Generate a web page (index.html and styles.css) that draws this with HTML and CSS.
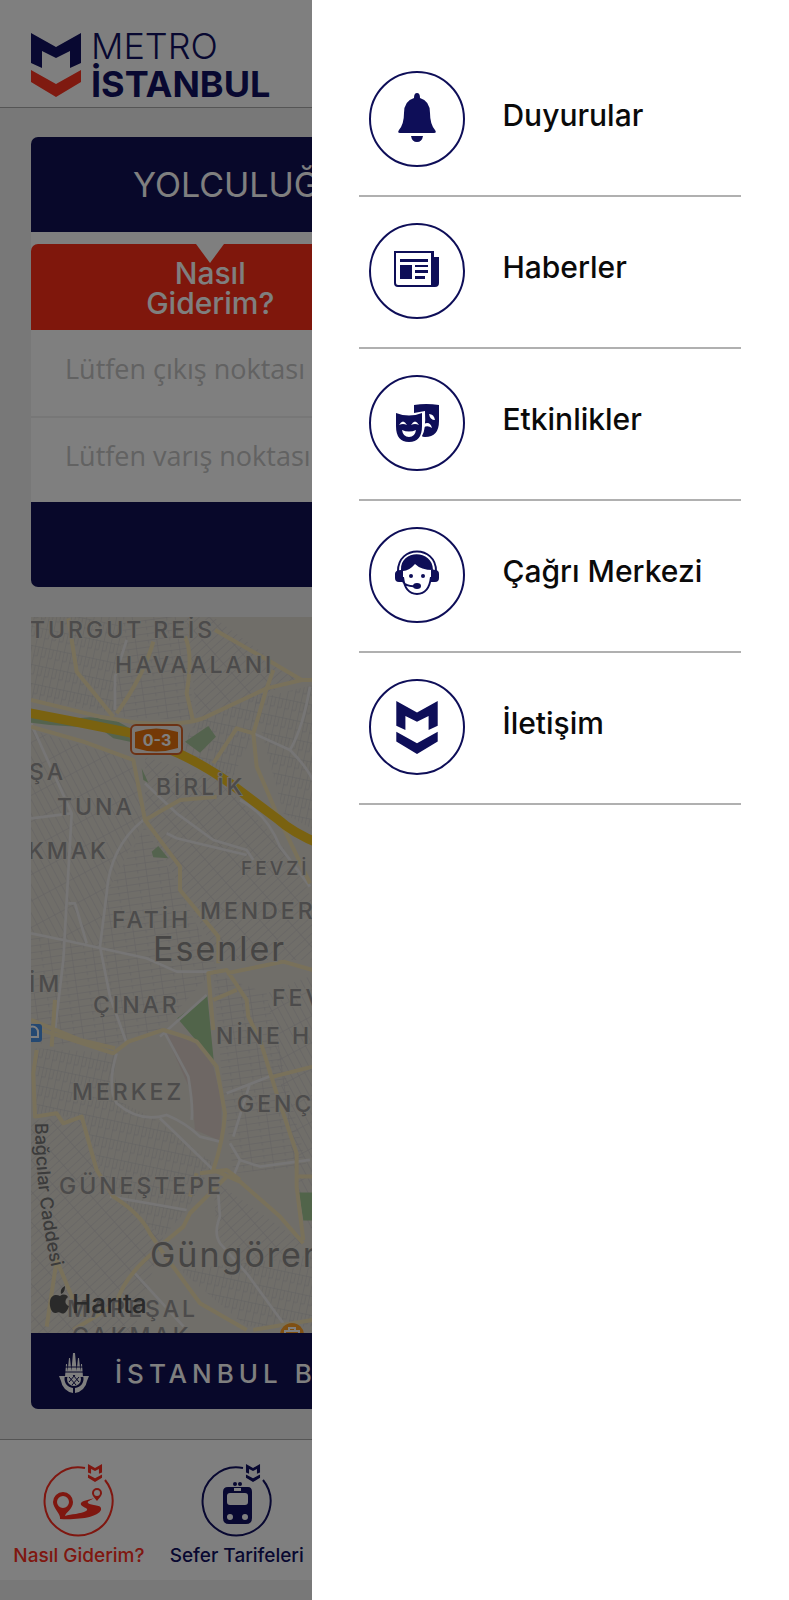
FILE: index.html
```html
<!DOCTYPE html>
<html lang="tr">
<head>
    <meta charset="UTF-8">
    <meta name="viewport" content="width=device-width, initial-scale=1">
    <title>Metro İstanbul</title>
    <link rel="stylesheet" href="styles.css">
</head>
<body>
<svg width="0" height="0" class="defs">
    <symbol id="m-mark" viewBox="0 0 50 64">
        <path d="M0 0L25 14L50 0V30L39 35V18L25 25L11 18V35L0 30Z"/>
        <path class="m-low" d="M0 37L25 51L50 37V49L25 64L0 49Z"/>
    </symbol>
</svg>
<div class="app">
    <header class="header">
        <svg class="logo-mark" viewBox="0 0 50 64"><use href="#m-mark"/></svg>
        <div class="logo-text">
            <span class="thin">METRO</span>
            <span class="bold">İSTANBUL</span>
        </div>
    </header>
    <main class="content">
        <section class="planner">
            <h1 class="planner-title">YOLCULUĞ</h1>
            <div class="tabs">
                <button class="tab" type="button">Nasıl<br>Giderim?</button>
            </div>
            <input class="field" type="text" aria-label="Çıkış noktası" placeholder="Lütfen çıkış noktası">
            <input class="field" type="text" aria-label="Varış noktası" placeholder="Lütfen varış noktası">
            <div class="planner-foot"></div>
        </section>
        <section class="map-card">
            <svg class="map">
                <defs>
                    <pattern id="s1" width="22" height="56" patternUnits="userSpaceOnUse" patternTransform="rotate(12)">
                        <path d="M0 1H22M0 29H11M1 0V56M12 0V29"/>
                    </pattern>
                    <pattern id="s2" width="20" height="70" patternUnits="userSpaceOnUse" patternTransform="rotate(-28)">
                        <path d="M0 1H20M1 0V70"/>
                    </pattern>
                    <pattern id="s3" width="64" height="20" patternUnits="userSpaceOnUse" patternTransform="rotate(-8)">
                        <path d="M0 1H64M1 0V20M40 0V10"/>
                    </pattern>
                    <pattern id="s4" width="19" height="62" patternUnits="userSpaceOnUse" patternTransform="rotate(48)">
                        <path d="M0 1H19M1 0V62"/>
                    </pattern>
                </defs>
                <!-- 3 units = 1px, origin at the top left of the screen -->
                <g transform="translate(-31 -17) scale(.3333)">
                    <g>
                        <path fill="url(#s1)" d="M93 51H370L345 340L93 300Z"/>
                        <path fill="url(#s3)" d="M370 51H560L580 360L345 350Z"/>
                        <path fill="url(#s4)" d="M560 51H640L900 240L590 360Z"/>
                        <path fill="url(#s1)" d="M590 360L800 265L760 400L690 550L540 450Z"/>
                        <path fill="url(#s2)" d="M93 390L400 480L435 660L320 880L300 1040L93 1000Z"/>
                        <path fill="url(#s4)" d="M435 470L660 540L850 740L920 860L1000 1080H660L540 860L435 660Z"/>
                        <path fill="url(#s1)" d="M760 300L1000 240V720L850 640Z"/>
                        <path fill="url(#s3)" d="M435 680L540 870L650 1100L480 1290L350 1340L93 1330V1000L300 1040L320 880Z"/>
                        <path fill="url(#s1)" d="M105 1345L345 1360L350 1500L470 1560L640 1690L560 1830L490 1910L330 1790L250 1550L110 1550Z"/>
                        <path fill="url(#s4)" d="M93 1560L250 1550L330 1790L490 1910L400 2199H93Z"/>
                        <path fill="url(#s3)" d="M640 1120L800 1180L920 1700L700 1720L670 1480Z"/>
                        <path fill="url(#s2)" d="M800 1180L1000 1100V1900L910 1880Z"/>
                        <path fill="url(#s4)" d="M640 1740L910 1930L740 2020L650 1900Z"/>
                        <path fill="url(#s1)" d="M540 2010L1000 1960V2180H740Z"/>
                    </g>
                    <path fill="#a9c79c" d="M93 350L160 360L270 352L345 360L390 385V425L340 415L300 385L150 375L93 368ZM555 425L625 378L648 410L600 458ZM455 755L475 738L505 775L460 772ZM425 505L445 548L430 540Z"/>
                    <path fill="#a3c895" d="M532 1255L622 1186L643 1400L600 1335ZM897 1778H1000V1862H910Z"/>
                    <path fill="#dccfc9" d="M495 1300L590 1325L640 1400L665 1500V1625L585 1590L575 1480Z"/>
                    <g class="road-white">
                        <path d="M380 120L345 230V330M93 370L215 640L190 1080L165 1290M93 655L215 640M430 660Q330 740 320 880L300 1040L330 1190L380 1330M93 1000L190 1020L440 1075L530 1115H640M205 910H225L260 1030M435 550L530 640L640 720L740 750L760 780M500 700L530 715L740 765M760 400L870 450Q920 500 938 540M930 260Q910 380 870 450M720 600Q800 640 840 740L930 860M490 1290L565 1430Q580 1520 575 1560M480 1310L620 1185M350 1360Q320 1460 350 1510Q420 1570 500 1545Q560 1570 600 1610L660 1625M480 1555L640 1710M680 1480L820 1425M750 1450L700 1610M690 1630L720 1680L700 1730M720 1680L780 1700L930 1680M330 1790L560 1830M655 1785L660 1850Q640 1900 660 1930L740 2020L850 2170M400 2015L560 2190"/>
                    </g>
                    <g class="road-yellow">
                        <path d="M205 55L230 215L340 350M460 125Q430 230 350 340M555 110Q580 160 560 280L580 365M645 90L820 190L905 240H938M905 240L800 265L620 350Q560 380 410 368L300 350L93 300M800 265L760 400L770 500L830 640L930 850M820 210L800 265M93 380L250 425L400 480L435 660L540 800V870L655 1010V1090M435 660L540 600L650 590M640 490L710 385L760 400"/>
                        <path d="M93 1280L340 1360L385 1325L490 1290Q560 1310 590 1325L650 1400L675 1540Q670 1620 640 1710L720 1745L840 1850L910 1930M110 1350L100 1420L105 1550L170 1540L190 1570L245 1550L290 1710L340 1790Q420 1840 450 1900L490 1960L600 2110L740 2190M640 1290L625 1120L680 1110L740 1200L745 1250L780 1320L830 1480L890 1660V1760L910 1920M93 1260L240 1320L345 1345M165 1200L155 1340M640 1200L710 1170M680 1120L850 1085L938 1110M820 1430L938 1400M680 1730L570 1840L550 1880L490 1930M590 1720L570 1790M600 1720L680 1710L720 1740M470 1950Q370 2030 350 2110L220 2190M140 2180L170 1980L240 2150M760 2190L938 2160M895 1730H938"/>
                    </g>
                    <path class="highway" d="M70 335L250 370L390 398L540 462Q620 500 690 550L830 655Q880 700 960 732"/>
                </g>
                <g class="shield">
                    <rect x="100" y="108" width="51" height="29" rx="5"/>
                    <path d="M104 115Q125 108 147 115V131Q125 138 104 131Z"/>
                    <text x="126" y="129">0-3</text>
                </g>
                <rect x="-7" y="407" width="18" height="18" rx="3" fill="#4a92e4"/>
                <path d="M-4 420V415A5 5 0 0 1 7 415V420Z" fill="none" stroke="#fff" stroke-width="2"/>
                <circle cx="261" cy="718" r="12" fill="#ffa126"/>
                <path d="M254 714H268V722H254ZM258 714V711H264V714" fill="none" stroke="#fff" stroke-width="2"/>
                <g class="labels">
                    <text x="-1" y="21">TURGUT REİS</text>
                    <text x="84" y="56">HAVAALANI</text>
                    <text x="-2" y="163">ŞA</text>
                    <text x="26" y="198">TUNA</text>
                    <text x="125" y="178">BİRLİK</text>
                    <text x="-3" y="242">KMAK</text>
                    <text class="small" x="210" y="258">FEVZİ</text>
                    <text x="169" y="302">MENDERES</text>
                    <text x="81" y="311">FATİH</text>
                    <text class="city" x="122" y="344">Esenler</text>
                    <text x="-2" y="375">İM</text>
                    <text x="62" y="396">ÇINAR</text>
                    <text x="241" y="389">FEVZİ</text>
                    <text x="185" y="427">NİNE H</text>
                    <text x="41" y="483">MERKEZ</text>
                    <text x="206" y="495">GENÇ</text>
                    <text x="28" y="577">GÜNEŞTEPE</text>
                    <text class="city" x="119" y="650">Güngören</text>
                    <text x="36" y="700">MAREŞAL</text>
                    <text x="41" y="727">ÇAKMAK</text>
                </g>
                <path id="cadde" d="M4 506Q5 580 20 648" fill="none"/>
                <text class="street"><textPath href="#cadde">Bağcılar Caddesi</textPath></text>
                <path class="apple" d="M30 677C29 672 32 670 34 669C34 673 33 676 30 677ZM29 679C32 677 35 677 37 680C33 683 34 688 38 689C36 695 33 698 30 696C28 695 27 695 25 696C21 697 18 690 19 684C20 678 25 677 29 679Z"/>
                <text class="brand" x="41" y="696">Harıta</text>
            </svg>
            <div class="banner">
                <svg class="emblem" viewBox="0 0 30 40">
                    <path d="M14 0H16L18 22H12ZM10 5H11L13 24H8ZM19 5H20L22 24H17ZM7 11H8L9 24H6ZM22 11H23L24 24H21Z"/>
                    <circle cx="15" cy="26" r="7"/>
                    <path d="M0 23H6A9 9 0 0 0 14 35V40A14 14 0 0 1 2 28ZM30 23H24A9 9 0 0 1 16 35V40A14 14 0 0 0 28 28Z"/>
                    <path class="cut" d="M6 14H24M6 19H24M10 24L17 32M14 22L20 29M20 24L13 32M16 22L10 29"/>
                </svg>
                <span class="banner-text">İSTANBUL B</span>
            </div>
        </section>
    </main>
    <nav class="tabbar">
        <a class="tabbar-item on" href="#">
            <svg viewBox="0 0 72 74">
                <path class="ring" d="M42 4A34 34 0 1 0 62 16"/>
                <use href="#m-mark" x="44" y="0" width="16" height="18"/>
                <path d="M20 28A10 10 0 0 1 30 38C30 45 23 48 22 52C28 50 38 50 43 47C48 44 36 43 38 39C40 36 46 36 51 34C47 37 44 37 45 39C48 42 60 40 58 46C55 53 37 56 17 55C18 50 10 44 10 38A10 10 0 0 1 20 28ZM20 32A6 6 0 1 0 20 44A6 6 0 1 0 20 32Z" fill-rule="evenodd"/>
                <path d="M54 24A5 5 0 0 1 59 29C59 32 56 34 54 37C52 34 49 32 49 29A5 5 0 0 1 54 24ZM54 26A3 3 0 1 0 54 32A3 3 0 1 0 54 26Z" fill-rule="evenodd"/>
            </svg>
            Nasıl Giderim?
        </a>
        <a class="tabbar-item" href="#">
            <svg viewBox="0 0 72 74">
                <path class="ring" d="M42 4A34 34 0 1 0 62 16"/>
                <use href="#m-mark" x="44" y="0" width="16" height="18"/>
                <path d="M27 23H47Q51 23 51 28V54Q51 60 45 60H28Q22 60 22 54V28Q22 23 27 23ZM29 29Q26 29 26 32V38Q26 41 29 41H44Q47 41 47 38V32Q47 29 44 29ZM33 24V27H40V24ZM29 50A3 3 0 1 0 29 56A3 3 0 1 0 29 50ZM44 50A3 3 0 1 0 44 56A3 3 0 1 0 44 50Z" fill-rule="evenodd"/>
                <circle cx="34" cy="20" r="2"/>
                <circle cx="39" cy="20" r="2"/>
            </svg>
            Sefer Tarifeleri
        </a>
    </nav>
</div>
<div class="shade"></div>
<aside class="drawer">
    <ul class="menu">
        <li><a href="#">
            <svg class="icon" viewBox="0 0 96 96">
                <circle cx="48" cy="48" r="47"/>
                <path d="M48 22Q51 22 51 27Q61 30 61 42Q61 53 66 59Q68 62 65 62H31Q28 62 30 59Q35 53 35 42Q35 30 45 27Q45 22 48 22ZM42 65H54Q53 71 48 71Q43 71 42 65Z"/>
            </svg>
            <span>Duyurular</span>
        </a></li>
        <li><a href="#">
            <svg class="icon" viewBox="0 0 96 96">
                <circle cx="48" cy="48" r="47"/>
                <path d="M25 28H65V34H70V60Q70 64 66 64H29Q25 64 25 60ZM27 30V60Q27 62 29 62H62V30ZM31 36H59V39H31ZM31 42H43V56H31ZM46 42H59V44H46ZM46 47H59V50H46ZM46 53H56V56H46Z" fill-rule="evenodd"/>
            </svg>
            <span>Haberler</span>
        </a></li>
        <li><a href="#">
            <svg class="icon" viewBox="0 0 96 96">
                <circle cx="48" cy="48" r="47"/>
                <path d="M45 30Q57 28 70 30V46Q70 62 56 62Q53 62 53 61Q57 55 56 36L45 38Z"/>
                <path d="M27 38Q40 43 53 38V51Q53 67 40 67Q27 67 27 51Z"/>
                <path class="cut" d="M30 50Q34 43 38 50Q34 48 30 50ZM42 50Q46 43 50 50Q46 48 42 50ZM33 55Q40 58 47 55Q46 62 40 62Q34 62 33 55ZM60 39Q65 39 66 45Q61 45 60 39ZM55 49Q61 46 63 53Q59 50 55 52Z"/>
            </svg>
            <span>Etkinlikler</span>
        </a></li>
        <li><a href="#">
            <svg class="icon" viewBox="0 0 96 96">
                <circle cx="48" cy="48" r="47"/>
                <path class="line" d="M29 44C29 18 67 18 67 44M34 50Q36 67 48 67Q60 67 62 50M34 55Q38 60 47 59"/>
                <path d="M32 43C31 22 64 22 64 43Q52 43 46 37Q40 44 34 44V55H30Q26 55 26 51V47Q26 43 32 43ZM62 42L66 43Q70 43 70 47V51Q70 55 66 55H62Z"/>
                <circle cx="42" cy="49" r="2"/>
                <circle cx="54" cy="49" r="2"/>
                <ellipse cx="48" cy="59" rx="4" ry="3"/>
            </svg>
            <span>Çağrı Merkezi</span>
        </a></li>
        <li><a href="#">
            <svg class="icon" viewBox="0 0 96 96">
                <circle cx="48" cy="48" r="47"/>
                <use href="#m-mark" x="27" y="22" width="42" height="53"/>
            </svg>
            <span>İletişim</span>
        </a></li>
    </ul>
</aside>
</body>
</html>
```
FILE: styles.css
```css
*{
    margin: 0;
    padding: 0;
    box-sizing: border-box;
    list-style: none;
}
body{
    font-family: "Open Sans","Noto Sans",sans-serif;
    background: #f0f0f0;
    overflow-x: hidden;
}
a{
    color: inherit;
    text-decoration: none;
}
.defs{
    position: absolute;
}
.app{
    min-height: 100vh;
    overflow: hidden;
}

/* header */
.header{
    display: flex;
    align-items: flex-end;
    gap: 10px;
    height: 108px;
    padding: 0 31px 10px;
    background: #fff;
    border-bottom: 1px solid #aaa;
}
.logo-mark{
    --low: #ff3420;
    width: 50px;
    height: 64px;
    fill: #101062;
}
.m-low{
    fill: var(--low,inherit);
}
.logo-text{
    display: flex;
    flex-direction: column;
    height: 70px;
    color: #101062;
    font-family: Inter,"Noto Sans",sans-serif;
    font-size: 36px;
    line-height: 38px;
}
.thin{
    font-weight: 300;
}
.bold{
    font-weight: 700;
}

/* route planner */
.content{
    padding: 29px 31px 30px;
}
.planner{
    border-radius: 7px;
    overflow: hidden;
    background: #fff;
}
.planner-title{
    height: 95px;
    padding-left: 102px;
    line-height: 95px;
    font-family: Inter,"Noto Sans",sans-serif;
    font-size: 34px;
    font-weight: 400;
    color: #fff;
    background: #101054;
}
.tabs{
    display: grid;
    grid-template-columns: 1fr 1fr;
    column-gap: 10px;
    margin-top: 12px;
    background: #ff2e18;
    border-radius: 7px 7px 0 0;
}
.tab{
    position: relative;
    height: 86px;
    padding-top: 2px;
    border: 0;
    background: none;
    color: #fff;
    font-family: Inter,"Noto Sans",sans-serif;
    font-size: 30px;
    font-weight: 500;
    line-height: 30px;
}
.tab::before{
    content: "";
    position: absolute;
    top: 0;
    left: 50%;
    margin-left: -14px;
    border: 14px solid transparent;
    border-top: 19px solid #fff;
    border-bottom: 0;
}
.field{
    display: block;
    width: 100%;
    height: 86px;
    padding: 0 34px 10px;
    border: 0;
    background: #fff;
    font-family: inherit;
    font-size: 27px;
}
.field + .field{
    border-top: 2px solid #eee;
}
.field::placeholder{
    color: #c4c4c4;
    opacity: 1;
}
.planner-foot{
    height: 85px;
    background: #101054;
}

/* map */
.map-card{
    margin-top: 30px;
    border-radius: 0 0 7px 7px;
    overflow: hidden;
}
.map{
    display: block;
    width: 100%;
    height: 716px;
    background: #e0dcd3;
    font-family: Inter,"Noto Sans",sans-serif;
}
.map pattern path{
    fill: none;
    stroke: #c9c7c6;
    stroke-width: 2;
}
.road-white,
.road-yellow{
    fill: none;
    stroke-linejoin: round;
}
.road-white{
    stroke: #ecebea;
    stroke-width: 8;
}
.road-yellow{
    stroke: #f3e2b4;
    stroke-width: 12;
}
.highway{
    fill: none;
    stroke: #f4c420;
    stroke-width: 28;
}
.shield rect{
    fill: #f4ede6;
    stroke: #d9652a;
    stroke-width: 2;
}
.shield path{
    fill: #e8720c;
}
.shield text{
    fill: #fff;
    font-size: 16px;
    font-weight: 700;
    text-anchor: middle;
}
.labels{
    fill: #999796;
    stroke: #e0dcd3;
    stroke-width: 2px;
    paint-order: stroke;
    font-size: 23px;
    font-weight: 500;
    letter-spacing: 3px;
}
.labels .small{
    font-size: 19px;
}
.labels .city{
    font-size: 34px;
    font-weight: 400;
    letter-spacing: 2px;
    fill: #8c8a88;
}
.street{
    fill: #777;
    font-size: 18px;
    font-weight: 500;
}
.apple,
.brand{
    fill: #555;
}
.brand{
    font-size: 26px;
    font-weight: 500;
}
.banner{
    display: flex;
    align-items: center;
    gap: 26px;
    height: 76px;
    padding: 4px 28px 0;
    background: #101054;
    color: #fff;
}
.emblem{
    width: 30px;
    height: 40px;
    fill: #fff;
}
.emblem .cut{
    fill: none;
    stroke: #101054;
}
.banner-text{
    font-family: Inter,"Noto Sans",sans-serif;
    font-size: 26px;
    font-weight: 500;
    letter-spacing: 5px;
    white-space: nowrap;
}

/* bottom bar */
.tabbar{
    display: grid;
    grid-template-columns: repeat(5,1fr);
    height: 141px;
    padding-top: 24px;
    background: #fff;
    border-top: 1px solid #aaa;
    font-family: Inter,"Noto Sans",sans-serif;
}
.tabbar-item{
    display: flex;
    flex-direction: column;
    align-items: center;
    gap: 6px;
    color: #101062;
    fill: #101062;
    font-size: 19px;
    font-weight: 500;
    line-height: 24px;
    white-space: nowrap;
}
.tabbar-item.on{
    color: #ff2e20;
    fill: #ff2e20;
}
.tabbar-item svg{
    width: 72px;
    height: 74px;
}
.ring{
    fill: none;
    stroke: currentColor;
    stroke-width: 2;
}

/* drawer */
.shade{
    position: fixed;
    top: 0;
    right: 0;
    bottom: 0;
    left: 0;
    background: rgba(0,0,0,.5);
}
.drawer{
    position: fixed;
    top: 0;
    right: 0;
    bottom: 0;
    width: 60.4%;
    padding: 45px 48px 0 47px;
    background: #fff;
    overflow: auto;
}
.menu a{
    display: flex;
    align-items: center;
    gap: 37px;
    height: 152px;
    padding: 0 0 2px 10px;
    border-bottom: 2px solid #b0b0b0;
    color: #0a0a0a;
    font-family: Inter,"Noto Sans",sans-serif;
    font-size: 30px;
    font-weight: 500;
}
.menu span{
    padding-bottom: 8px;
}
.icon{
    flex: none;
    width: 96px;
    height: 96px;
    fill: #0e0e58;
}
.icon > circle:first-child,
.icon .line{
    fill: none;
    stroke: #0e0e58;
    stroke-width: 2;
}
.icon .cut{
    fill: #fff;
}
```
